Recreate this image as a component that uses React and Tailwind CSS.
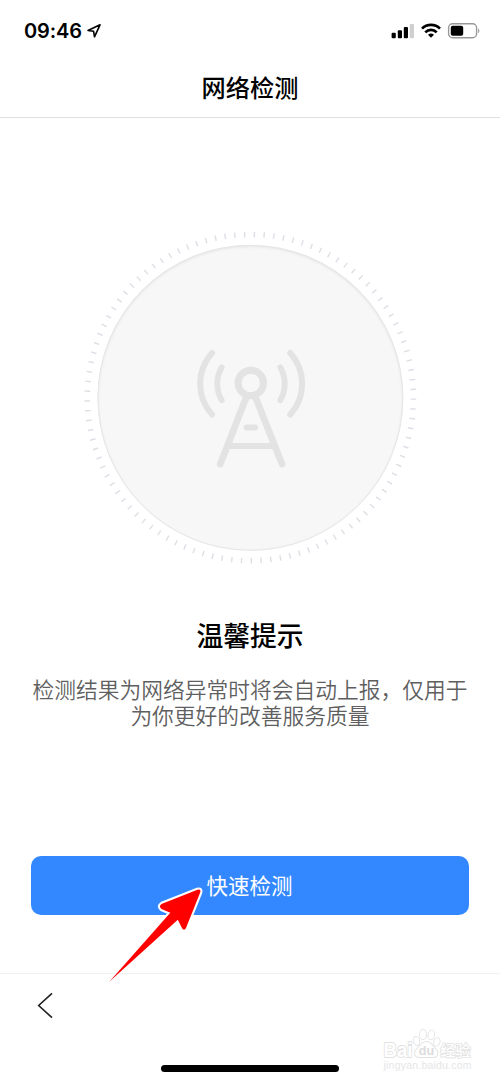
import React from 'react';

const TICK_COUNT = 105;
const ticks = Array.from({ length: TICK_COUNT }, (_, i) => 1.4 + (i * 360) / TICK_COUNT);

function StatusBar() {
  return (
    <div className="flex h-[60px] items-center justify-between pt-[2px] pl-[24px] pr-[19px]">
      <div className="flex items-center">
        <span className="font-['Inter','Liberation_Sans',sans-serif] text-[20px] font-semibold leading-6 tracking-[-0.1px]">
          09:46
        </span>
        <svg width="16" height="16" viewBox="0 0 16 16" fill="none" className="ml-[4px]">
          <path d="M14 1.8 L2 7.5 L7.6 8.3 L8.5 13.8 Z" stroke="#000" strokeWidth="1.6" strokeLinejoin="round" />
        </svg>
      </div>

      <div className="flex items-center">
        {/* Sinal */}
        <svg width="24" height="16" viewBox="0 0 24 16">
          <rect x="0.6" y="9.8" width="4.2" height="5.4" rx="1" />
          <rect x="6.8" y="7.2" width="4.2" height="8" rx="1" />
          <rect x="12.8" y="4" width="4.2" height="11.2" rx="1" />
          <rect x="18.8" y="1" width="4.2" height="14.2" rx="1" fill="#cfcfcf" />
        </svg>
        {/* Wi-Fi */}
        <svg width="20" height="16" viewBox="0 0 20 16" fill="none" stroke="#000" strokeWidth="2.7" className="ml-[6px]">
          <path d="M1 5.6 A12.8 12.8 0 0 1 19 5.6" />
          <path d="M4.3 9.4 A7.9 7.9 0 0 1 15.7 9.4" />
          <path d="M10 14.8 L7 11.8 A4.4 4.4 0 0 1 13 11.8 Z" fill="#000" stroke="none" />
        </svg>
        {/* Bateria */}
        <svg width="34" height="16" viewBox="0 0 34 16" className="ml-[6px]">
          <rect x="1.6" y="0.8" width="28" height="14" rx="4" fill="none" stroke="#999" strokeWidth="1.4" />
          <rect x="3.8" y="2.8" width="12.4" height="10" rx="2" />
          <path d="M31.2 5.2 Q33.6 7.8 31.2 10.4 Z" fill="#999" />
        </svg>
      </div>
    </div>
  );
}

// Mostrador circular com a antena no centro
function Radar() {
  return (
    <svg width="340" height="340" viewBox="80 228 340 340" className="ml-[80px] mt-[110px] shrink-0" fill="none">
      <defs>
        <clipPath id="disc">
          <circle cx="250.4" cy="397.8" r="152.8" />
        </clipPath>
        <filter id="soft" x="-10%" y="-10%" width="120%" height="120%">
          <feGaussianBlur stdDeviation="1.6" />
        </filter>
      </defs>
      {ticks.map((angle) => (
        <path
          key={angle}
          d="M250.4 231.7 V237.3"
          stroke="#dedfe6"
          strokeWidth="1.4"
          transform={`rotate(${angle} 250.4 397.6)`}
        />
      ))}
      <circle cx="250.4" cy="397.8" r="152.8" fill="#f7f7f7" />
      <g clipPath="url(#disc)">
        <circle cx="250.4" cy="398.8" r="153.8" stroke="#dedede" strokeWidth="2.4" filter="url(#soft)" />
      </g>
      <circle cx="250.4" cy="397.8" r="152.5" stroke="#e7e7e7" strokeWidth="1" />

      <g stroke="#e3e3e3" strokeWidth="6.4" strokeLinecap="round">
        <circle cx="250.8" cy="383" r="12.7" strokeWidth="7" />
        <path d="M246.8 396 L220.3 464 M255 396 L282 464" strokeWidth="6.8" />
        <path d="M247 396.2 H255" strokeWidth="5.6" strokeLinecap="butt" />
        <path d="M229 446 H273" strokeWidth="6" strokeLinecap="butt" />
        <path d="M246.6 427.4 H255" strokeWidth="6" />
        <path d="M221.7 367.2 A33 33 0 0 0 221.7 400.2" strokeWidth="5.8" />
        <path d="M280.3 367.2 A33 33 0 0 1 280.3 400.2" strokeWidth="5.8" />
        <path d="M212 353 A46 46 0 0 0 212 414.6" strokeWidth="6" />
        <path d="M290.3 353 A46 46 0 0 1 290.3 414.6" strokeWidth="6" />
      </g>
    </svg>
  );
}

function Pointer() {
  return (
    <svg width="110" height="110" viewBox="100 880 110 110" className="absolute left-[69px] top-[24px] z-10">
      {/* contorno branco só na ponta, a cauda fica limpa */}
      <path
        d="M164 920 L170.3 912.8 L161.5 909 Q158 906.2 162 903.8 L197.5 889.8 Q201.3 888.9 200.2 892.5 L186 928 Q184 931.5 181.8 927.8 L177.8 919.8 L170 927 Z"
        fill="#fff"
        stroke="#fff"
        strokeWidth="4.2"
        strokeLinejoin="round"
      />
      <path
        d="M109.3 981.7 L170.3 912.8 L161.5 909 Q158 906.2 162 903.8 L197.5 889.8 Q201.3 888.9 200.2 892.5 L186 928 Q184 931.5 181.8 927.8 L177.8 919.8 Z"
        fill="#f00"
      />
    </svg>
  );
}

function Watermark() {
  return (
    <svg width="100" height="50" viewBox="380 1025 100 50" className="absolute left-[380px] top-[51px]">
      <g fill="#fff" stroke="#e2e2e2" strokeWidth="1.8" strokeLinejoin="round" paintOrder="stroke" fontFamily="Liberation Sans, Noto Sans CJK SC, sans-serif" fontWeight="700">
        <text x="383.5" y="1057" fontSize="21" textLength="29" lengthAdjust="spacingAndGlyphs">Bai</text>
        <ellipse cx="416.5" cy="1041" rx="2.7" ry="4.2" transform="rotate(-15 416.5 1041)" />
        <ellipse cx="423" cy="1034.5" rx="3" ry="4.6" />
        <ellipse cx="431.2" cy="1034.9" rx="2.8" ry="4.4" transform="rotate(10 431.2 1034.9)" />
        <ellipse cx="436.8" cy="1042" rx="2.7" ry="4" transform="rotate(20 436.8 1042)" />
        <path d="M426.5 1042 C430 1042 431.5 1045 434.5 1048 C439 1052 438 1057 433 1057 H420 C414 1057 413.5 1052 418 1048 C421 1045 422.5 1042 426.5 1042 Z" />
        <text x="418.8" y="1055.2" fontSize="12.5" fill="#dcdcdc" stroke="none">du</text>
        <text x="440.2" y="1056" fontSize="15.3" strokeWidth="1.6" fontWeight="500">经验</text>
      </g>
      <text
        x="383.5"
        y="1068.6"
        fontSize="10.5"
        fill="#e6e6e6"
        fontFamily="Liberation Sans, sans-serif"
        textLength="88"
      >
        jingyan.baidu.com
      </text>
    </svg>
  );
}

export default function App() {
  return (
    <div className="flex h-[1083px] w-[500px] flex-col overflow-hidden bg-white font-['Noto_Sans_CJK_SC',sans-serif] text-black">
      <StatusBar />

      <header className="flex h-[58px] items-center justify-center border-b border-[#dfdfdf] pb-[3px]">
        <h1 className="text-[24.2px] font-medium leading-8">网络检测</h1>
      </header>

      <main className="flex h-[855px] flex-col">
        <Radar />
        <h2 className="mt-[49px] text-center text-[26.8px] font-medium leading-[36px]">温馨提示</h2>
        <p className="mt-[23px] whitespace-nowrap text-center text-[21.75px] font-[350] leading-[26px] text-[#5f5f5f]">
          检测结果为网络异常时将会自动上报，仅用于
          <br />
          为你更好的改善服务质量
        </p>

        <div className="relative mx-[31px] mt-[128px]">
          <button type="button" className="block h-[59px] w-full rounded-[10px] bg-[#3388ff] pr-[1px] pb-[2px] text-[21.5px] leading-[57px] text-white">
            快速检测
          </button>
          <Pointer />
        </div>
      </main>

      <footer className="relative h-[110px] border-t border-[#f1f1f1]">
        <svg width="20" height="30" viewBox="35 990 20 30" fill="none" className="ml-[35px] mt-[16px]">
          <path d="M52 993.3 L38.7 1005.5 L52 1017.7" stroke="#222" strokeWidth="1.6" />
        </svg>
        <div className="mx-auto mt-[45px] h-[7px] w-[178px] rounded-full bg-black" />
        <Watermark />
      </footer>
    </div>
  );
}
